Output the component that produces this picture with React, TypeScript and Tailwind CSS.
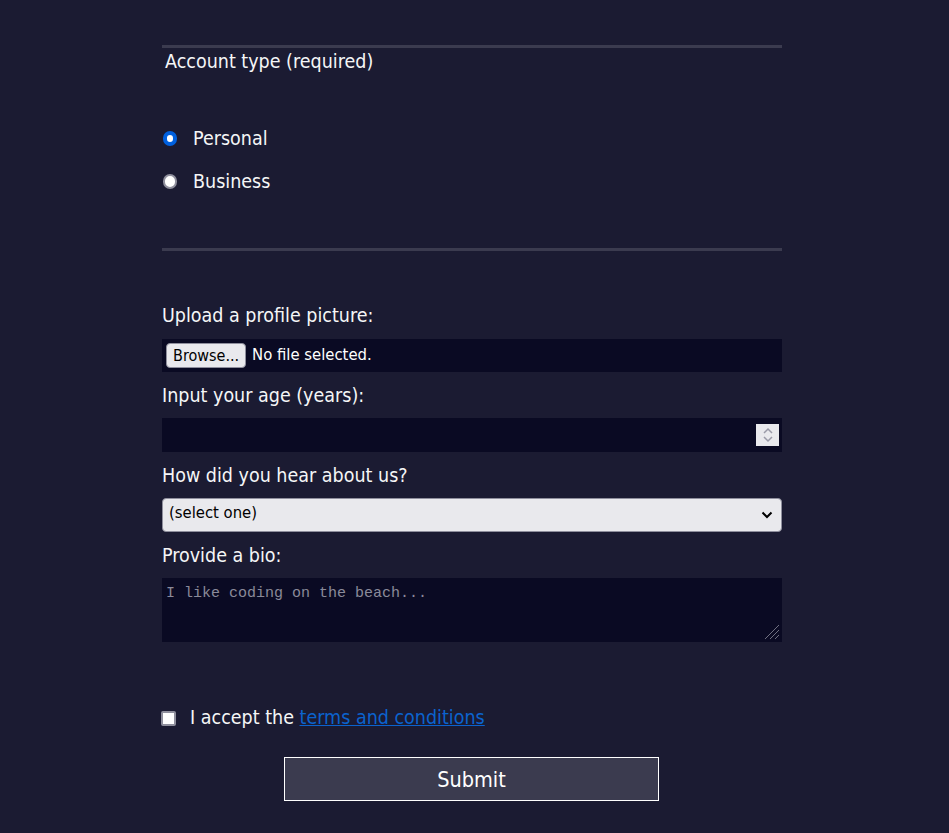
import React from 'react';

const font = { fontFamily: '"DejaVu Sans Condensed", "DejaVu Sans", sans-serif' };

function Radio({ checked, label }: { checked?: boolean; label: string }) {
  return (
    <div className="flex items-center h-[22px]">
      <span className="ml-[1px] flex h-[14px] w-[14px] items-center justify-center">
        {checked ? (
          <span className="h-[15px] w-[15px] rounded-full border-[4px] border-[#0060df] bg-white" />
        ) : (
          <span className="h-[15px] w-[15px] rounded-full border-2 border-[#8f8f9d] bg-white" />
        )}
      </span>
      <span className="ml-[16px] pt-[1px] text-[19.5px] text-[#f5f6f7]">{label}</span>
    </div>
  );
}

export default function App() {
  return (
    <div className="min-h-[833px] w-full bg-[#1b1b32] text-[#f5f6f7]" style={font}>
      <div className="ml-[162px] w-[620px] pt-[45px]">
        {/* previous fieldset border */}
        <div className="h-[3px] bg-[#3b3b4f]" />

        {/* Account type */}
        <div className="mt-[3px] ml-[3px] text-[19.5px] leading-[22px]">Account type (required)</div>
        <div className="mt-[54px] flex flex-col gap-[21px]">
          <Radio checked label="Personal" />
          <Radio label="Business" />
        </div>
        <div className="mt-[56px] h-[3px] bg-[#3b3b4f]" />

        {/* Profile fields */}
        <div className="mt-[53px] pt-[1px] text-[19.5px] leading-[22px]">Upload a profile picture:</div>
        <div className="mt-[12px] flex h-[33px] items-center bg-[#0a0a23] px-[4px]">
          <span className="flex h-[25px] items-center rounded-[4px] border border-[#8f8f9d] bg-[#e9e9ed] px-[6px] text-[16px] text-black">
            Browse...
          </span>
          <span className="ml-[6px] text-[16.5px] text-white">No file selected.</span>
        </div>

        <div className="mt-[12px] pt-[1px] text-[19.5px] leading-[22px]">Input your age (years):</div>
        <div className="mt-[11px] flex h-[34px] items-center justify-end bg-[#0a0a23] pr-[3px]">
          <span className="flex h-[22px] w-[23px] flex-col items-center justify-center bg-[#e9e9ed]">
            <svg width="12" height="16" viewBox="0 0 12 16" fill="none" stroke="#9a9aa8" strokeWidth="1.5">
              <path d="M2 6 L6 2 L10 6" />
              <path d="M2 10 L6 14 L10 10" />
            </svg>
          </span>
        </div>

        <div className="mt-[12px] pt-[1px] text-[19.5px] leading-[22px]">How did you hear about us?</div>
        <div className="mt-[11px] flex h-[34px] items-center justify-between rounded-[4px] border border-[#8f8f9d] bg-[#e9e9ed] pb-[4px] pl-[6px] pr-[8px] text-[16.5px] text-black">
          <span>(select one)</span>
          <svg className="mt-[4px]" width="12" height="8" viewBox="0 0 12 8" fill="none" stroke="#000" strokeWidth="2">
            <path d="M1.5 1.5 L6 6 L10.5 1.5" />
          </svg>
        </div>

        <div className="mt-[12px] pt-[1px] text-[19.5px] leading-[22px]">Provide a bio:</div>
        <div className="relative mt-[11px] h-[64px] bg-[#0a0a23] px-[4px] pt-[2px]">
          <span className="text-[15px] text-[#8a8a9a]" style={{ fontFamily: '"Liberation Mono", monospace' }}>
            I like coding on the beach...
          </span>
          <svg className="absolute bottom-[2px] right-[2px]" width="18" height="18" viewBox="0 0 18 18" stroke="#6f6f80" strokeWidth="1">
            <path d="M17 3 L3 17" />
            <path d="M17 8 L8 17" />
            <path d="M17 13 L13 17" />
          </svg>
        </div>

        {/* Terms */}
        <div className="mt-[65px] ml-[-1px] flex h-[22px] items-center">
          <span className="h-[15px] w-[15px] rounded-[2px] border-2 border-[#8f8f9d] bg-white" />
          <span className="ml-[14px] text-[19.5px]">
            I accept the{' '}
            <a href="#" className="text-[#0b63ce] underline">
              terms and conditions
            </a>
          </span>
        </div>

        <div className="mt-[28px] flex justify-center">
          <button className="ml-[-1px] h-[44px] w-[375px] border border-white bg-[#3b3b4f] pt-[3px] text-[21.5px] text-white" style={font}>
            Submit
          </button>
        </div>
      </div>
    </div>
  );
}
